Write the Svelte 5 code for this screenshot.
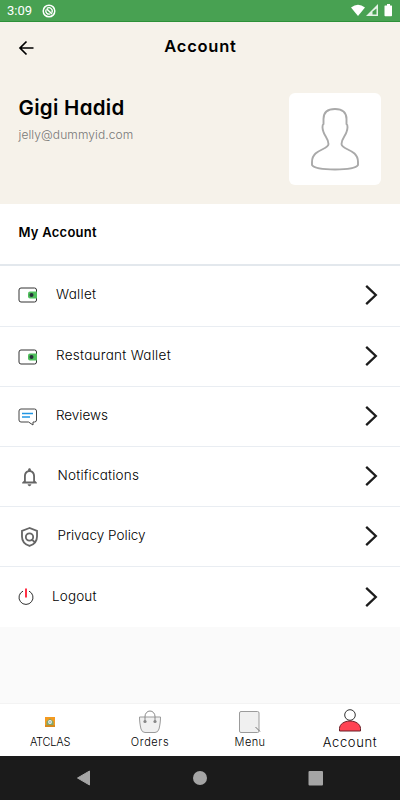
<script lang="ts">
    type Item = {
        icon: string;
        label: string;
        spacing: number;
        gap: number;
    };

    const items: Item[] = [
        { icon: "wallet", label: "Wallet", spacing: 0.3, gap: 56 },
        { icon: "wallet", label: "Restaurant Wallet", spacing: 0.27, gap: 56 },
        { icon: "reviews", label: "Reviews", spacing: -0.05, gap: 56 },
        { icon: "bell", label: "Notifications", spacing: 0.2, gap: 57.5 },
        { icon: "privacy", label: "Privacy Policy", spacing: 0, gap: 57.5 },
        { icon: "power", label: "Logout", spacing: 0.15, gap: 52 },
    ];

    const tabs: { name: string; spacing: number }[] = [
        { name: "ATCLAS", spacing: -0.25 },
        { name: "Orders", spacing: 0.6 },
        { name: "Menu", spacing: 0.4 },
        { name: "Account", spacing: 0.65 },
    ];
    let active = "Account";
</script>

<div class="screen">
    <div class="status">
        <span class="time">3:09</span>
        <svg class="app-dot" width="14" height="14" viewBox="0 0 14 14">
            <circle cx="7" cy="7" r="5.8" fill="none" stroke="#fff" stroke-width="1.5" />
            <path d="M9.800 8.700A3.300 3.300 0 0 0 5 4.400M4 5.800A3.300 3.300 0 0 0 8.200 10" fill="none" stroke="#fff" stroke-width="1.300" />
            <path d="M4.500 4.800l5.500 5.200" stroke="#fff" stroke-width="1.500" />
        </svg>
        <svg class="signals" width="42" height="14" viewBox="0 0 42 14">
            <path d="M0 3.500Q7 -1.800 14 3.500L7 12z" fill="#fff" />
            <path d="M27 0v12H15z" fill="#fff" fill-opacity=".85" />
            <path d="M25.500 4.500v6h-4v-3z" fill="#48a152" />
            <path d="M34.500 1.500h1.500V0h3v1.500h1.500q.5 0 .5.5v9.500q0 .8-.8.8h-5.900q-.8 0-.8-.8V2q0-.5.5-.5z" fill="#fff" />
        </svg>
    </div>

    <header>
        <div class="bar">
            <svg class="back" width="16" height="16" viewBox="0 0 16 16">
                <path d="M15.500 8H2.500M8.500 1.500L2 8L8.500 14.500" fill="none" stroke="#000" stroke-width="1.700" />
            </svg>
            <h1>Account</h1>
        </div>
        <div class="profile">
            <div class="who">
                <div class="name">Gigi Hadid</div>
                <div class="email">jelly@dummyid.com</div>
            </div>
            <div class="avatar">
                <svg width="92" height="92" viewBox="0 0 92 92">
                    <path
                        d="M46 16C38 16 34.500 20 34.500 26V31C33 32 33.300 36 34.500 39C35.500 43 39.500 46 39.500 51C39.500 57 23 56 23 69V72C27 78 65 78 69 72V69C69 56 52.500 57 52.500 51C52.500 46 56.500 43 57.500 39C58.700 36 59 32 57.500 31V26C57.500 20 54 16 46 16z"
                        fill="none"
                        stroke="#a9a9a9"
                        stroke-width="1.900"
                    />
                </svg>
            </div>
        </div>
    </header>

    <h2><span>My Account</span></h2>

    <div class="list">
        {#each items as item}
            <div class="row">
                <div class="icon" style="width: {item.gap}px">
                    {#if item.icon === "wallet"}
                        <svg width="20" height="18" viewBox="0 0 20 18">
                            <rect x="1" y="2" width="17.500" height="14" rx="2" fill="none" stroke="#333" />
                            <path d="M19 5.500v7h-7q-2 0-2-2v-3q0-2 2-2z" fill="#4fbe5c" />
                            <circle cx="13.500" cy="9" r="2" fill="#26313a" />
                        </svg>
                    {:else if item.icon === "reviews"}
                        <svg width="20" height="18" viewBox="0 0 20 18">
                            <path
                                d="M3 1h13.500q2 0 2 2v9q0 2-2 2h-1.500v3l-4.500-3H3q-2 0-2-2V3q0-2 2-2z"
                                fill="none"
                                stroke="#444"
                            />
                            <path d="M4 5.500h11M4 9h8" stroke="#2196e3" stroke-width="1.600" />
                        </svg>
                    {:else if item.icon === "bell"}
                        <svg class="material" width="23" height="22" viewBox="0 0 24 24">
                            <path
                                d="M12 22c1.100 0 2-.9 2-2h-4c0 1.100.9 2 2 2zm6-6v-5c0-3.070-1.630-5.640-4.500-6.320V4c0-.83-.67-1.500-1.500-1.500s-1.500.67-1.500 1.500v.68C7.640 5.360 6 7.920 6 11v5l-2 2v1h16v-1l-2-2zm-2 1H8v-6c0-2.480 1.510-4.500 4-4.500s4 2.020 4 4.500v6z"
                                fill="#666"
                            />
                        </svg>
                    {:else if item.icon === "privacy"}
                        <svg class="material" width="23" height="22" viewBox="0 0 24 24">
                            <path
                                d="M12 2.200L3.800 5.300v6.200c0 5 3.500 8.800 8.200 10.300c4.700-1.500 8.200-5.300 8.200-10.300V5.300z"
                                fill="none"
                                stroke="#666"
                                stroke-width="2"
                            />
                            <circle cx="12" cy="12" r="4" fill="none" stroke="#666" stroke-width="2" />
                            <path d="M14.500 14.500l3.500 3.500" stroke="#666" stroke-width="2" />
                        </svg>
                    {:else}
                        <svg width="16" height="18" viewBox="0 0 16 18">
                            <path d="M5 3.100A7 7 0 1 0 11 3.100" fill="none" stroke="#333" />
                            <path d="M8 .5v9" stroke="#ff3045" stroke-width="2" />
                        </svg>
                    {/if}
                </div>
                <span class="label" style="letter-spacing: {item.spacing}px">{item.label}</span>
                <svg class="chevron" width="14" height="22" viewBox="0 0 14 22">
                    <path d="M2.200 1.800L11.800 11L2.200 20.200" fill="none" stroke="#1c1c1c" stroke-width="2.300" />
                </svg>
            </div>
        {/each}
    </div>

    <div class="filler"></div>

    <nav>
        {#each tabs as tab}
            <div class="tab" class:active={tab.name === active}>
                {#if tab.name === "ATCLAS"}
                    <svg width="24" height="26" viewBox="0 0 24 26">
                        <rect x="7" y="9" width="10" height="10" fill="#f39a20" />
                        <path d="M8.500 13.500L12 10.500l3.500 3v3.500h-7z" fill="#82a66a" />
                        <circle cx="12" cy="14" r="1.900" fill="#eef2f5" />
                        <circle cx="12" cy="14" r=".8" fill="#668bb0" />
                        <path d="M7 18h10" stroke="#b8791b" />
                    </svg>
                {:else if tab.name === "Orders"}
                    <svg width="24" height="26" viewBox="0 0 24 26">
                        <path d="M1.500 9h21c0 4-.5 8-1.500 12q-1 3.500-4 3.500H7q-3 0-4-3.500C2 17 1.500 13 1.500 9z" fill="#f0f0f0" stroke="#9b9b9b" />
                        <path d="M7 13.500V8.500a5 5.500 0 0 1 10 0v5" fill="none" stroke="#888" />
                        <circle cx="7" cy="13.500" r="1.600" fill="#888" />
                        <circle cx="17" cy="13.500" r="1.600" fill="#888" />
                    </svg>
                {:else if tab.name === "Menu"}
                    <svg width="24" height="26" viewBox="0 0 24 26">
                        <rect x="1.500" y="3.500" width="19.500" height="21" rx="1.500" fill="#f0f0f0" stroke="#9b9b9b" />
                        <path d="M17.500 19l4.500 4.500" stroke="#777" />
                    </svg>
                {:else}
                    <svg width="24" height="26" viewBox="0 0 24 26">
                        <circle cx="12" cy="7" r="5.300" fill="#fff" stroke="#333" />
                        <path d="M1.500 23V20.500c0-4 4.500-7.500 10.500-7.500s10.500 3.500 10.500 7.500v2.500z" fill="#ff4353" stroke="#6b2028" />
                    </svg>
                {/if}
                <span style="letter-spacing: {tab.spacing}px">{tab.name}</span>
            </div>
        {/each}
    </nav>

    <div class="system">
        <svg width="16" height="18" viewBox="0 0 16 18">
            <path d="M13.500 2v14L1.500 9z" fill="#a5a5a5" stroke="#a5a5a5" stroke-linejoin="round" />
        </svg>
        <svg width="16" height="18" viewBox="0 0 16 18"><circle cx="8" cy="9" r="7" fill="#a5a5a5" /></svg>
        <svg width="16" height="18" viewBox="0 0 16 18"><rect x=".5" y="2" width="14.500" height="14.500" rx="1" fill="#a5a5a5" /></svg>
    </div>
</div>

<style>
    :global(body) {
        margin: 0;
        background: #fff;
    }
    .screen {
        width: 400px;
        height: 800px;
        display: flex;
        flex-direction: column;
        overflow: hidden;
        background: #fff;
        color: #000;
        font-family: Inter, "Open Sans", sans-serif;
        font-feature-settings: "cv11";
    }
    svg {
        display: block;
        flex: none;
    }
    .status {
        box-sizing: border-box;
        height: 22px;
        flex: none;
        display: flex;
        align-items: center;
        padding: 0 7px;
        background: #48a152;
        border-bottom: 1px solid #2c9138;
        color: #fff;
    }
    .time {
        font: 13px/22px Roboto, sans-serif;
        width: 35px;
        margin-top: 1px;
    }
    .app-dot {
        margin-top: 1px;
    }
    .signals {
        margin-left: auto;
        margin-top: 1px;
    }
    header {
        height: 182px;
        flex: none;
        background: #f6f2ea;
    }
    .bar {
        height: 71px;
        display: flex;
        align-items: flex-start;
        padding: 0 18px;
    }
    .back {
        margin-top: 18px;
    }
    h1 {
        flex: 1;
        margin: 0;
        padding: 12px 15px 0 0;
        font-size: 16.5px;
        line-height: 24px;
        font-weight: 600;
        text-align: center;
        letter-spacing: 0.75px;
    }
    .profile {
        display: flex;
        justify-content: space-between;
        padding: 0 18px 0 18.5px;
    }
    .name {
        margin-top: 1px;
        font-size: 20.5px;
        line-height: 28px;
        font-weight: 600;
        letter-spacing: 0.3px;
    }
    .email {
        margin-top: 4px;
        font-size: 12px;
        line-height: 18px;
        font-weight: 300;
        letter-spacing: 0.1px;
        color: #777;
    }
    .avatar {
        width: 92px;
        height: 92px;
        margin-right: 1px;
        border-radius: 6px;
        background: #fff;
    }
    h2 {
        box-sizing: border-box;
        height: 62px;
        flex: none;
        margin: 0;
        padding: 18px 18.5px 0;
        border-bottom: 2px solid #e3e8ed;
        font-size: 13px;
        line-height: 20px;
        font-weight: 600;
        letter-spacing: 0.25px;
    }
    .row {
        box-sizing: border-box;
        height: 60px;
        display: flex;
        align-items: center;
        padding: 0 22px 0 0;
        border-bottom: 1px solid #e9edf2;
    }
    .row:first-child {
        height: 61px;
        padding-bottom: 2px;
    }
    .row:last-child {
        border-bottom: none;
    }
    .icon {
        box-sizing: border-box;
        padding-left: 18px;
    }
    .label {
        flex: 1;
        margin-top: -3px;
        font-size: 13.5px;
        line-height: 20px;
        font-weight: 300;
    }
    .chevron {
        margin-top: -1px;
    }
    .filler {
        flex: 1;
        background: #fafafa;
    }
    nav {
        box-sizing: border-box;
        height: 53px;
        flex: none;
        display: flex;
        border-top: 1px solid #f3f3f3;
        background: #fff;
    }
    .tab {
        flex: 1;
        display: flex;
        flex-direction: column;
        align-items: center;
        padding-top: 4px;
        font-size: 11px;
        line-height: 17px;
        font-weight: 300;
    }
    .tab.active {
        font-size: 13px;
    }
    .system {
        height: 44px;
        flex: none;
        display: flex;
        justify-content: center;
        align-items: center;
        gap: 100px;
        background: #1b1b1b;
    }
</style>
